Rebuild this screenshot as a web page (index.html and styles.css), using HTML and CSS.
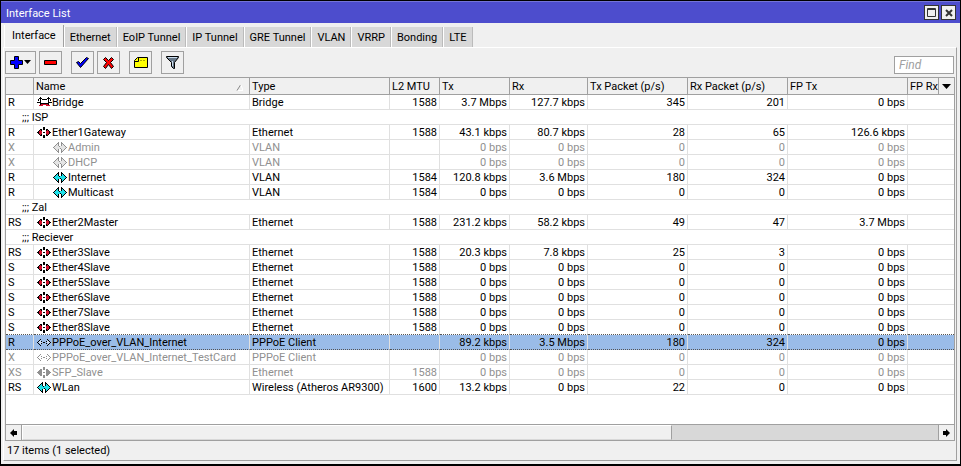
FILE: index.html
```
<!DOCTYPE html>
<html lang="en">
<head>
<meta charset="utf-8">
<title>Interface List</title>
<link rel="stylesheet" href="styles.css">
</head>
<body>
<svg class="sprite" aria-hidden="true">
<symbol id="eth" viewBox="0 0 14 11"><path fill="currentColor" d="M0 5h1V4h1V3h1V2h2v7H3V8H2V7H1V6H0zM14 5h-1V4h-1V3h-1V2H9v7h2V8h1V7h1V6h1zM6 0h2v3H6zM6 5h2v1H6zM6 8h2v3H6z"/><path d="M2 4h3v3H2zM3 3h1v5H3zM9 4h3v3H9zM10 3h1v5h-1z"/></symbol>
<symbol id="vlan" viewBox="0 0 14 11"><path d="M1 5h1V4h1V3h1V2h1V1h1v3h2V1h1v1h1v1h1v1h1v1h1v1h-1v1h-1v1h-1v1H9v1H8V7H6v3H5V9H4V8H3V7H2V6H1z"/><path fill="currentColor" d="M0 5h1v1H0zM1 4h1v1H1zM2 3h1v1H2zM3 2h1v1H3zM4 1h1v1H4zM5 0h1v4H5zM1 6h1v1H1zM2 7h1v1H2zM3 8h1v1H3zM4 9h1v1H4zM5 7h1v4H5zM13 5h1v1h-1zM12 4h1v1h-1zM11 3h1v1h-1zM10 2h1v1h-1zM9 1h1v1H9zM8 0h1v4H8zM12 6h1v1h-1zM11 7h1v1h-1zM10 8h1v1h-1zM9 9h1v1H9zM8 7h1v4H8zM6 4h1v1H6zM7 6h1v1H7z"/></symbol>
<symbol id="ppp" viewBox="0 0 14 9"><path fill="#fff" fill-opacity=".5" d="M1 4l2-2 2 2-2 2zM9 4l2-2 2 2-2 2z"/><path fill="currentColor" d="M0 4h1v1H0zM1 3h1v1H1zM2 2h1v1H2zM3 1h1v1H3zM4 3h1v1H4zM4 5h1v1H4zM1 5h1v1H1zM2 6h1v1H2zM3 7h1v1H3zM6 4h2v1H6zM13 4h1v1h-1zM12 3h1v1h-1zM11 2h1v1h-1zM10 1h1v1h-1zM9 3h1v1H9zM9 5h1v1H9zM12 5h1v1h-1zM11 6h1v1h-1zM10 7h1v1h-1z"/></symbol>
<symbol id="bridge" viewBox="0 0 15 11"><path fill="currentColor" d="M3 0h1v8H3zM11 0h1v8h-1zM4 1h1v1H4zM5 2h5v1H5zM10 1h1v1h-1zM2 1h1v1H2zM1 2h1v2H1zM12 1h1v1h-1zM13 2h1v2h-1zM0 5h3v1H0zM12 5h3v1h-3zM4 6h7v1H4z"/><path d="M4 7h7v1H4zM2 8h4v1H2zM9 8h4v1H9z"/></symbol>
</svg>
<main class="window">
<header class="titlebar"><h1>Interface List</h1>
<button aria-label="Maximize"><svg width="9" height="9"><path fill="none" stroke="#333" d="M.5.5h8v8h-8zM0 1.500h9"/></svg></button>
<button aria-label="Close"><svg width="8" height="8"><path stroke="#333" stroke-width="2" d="M1 1l6 6M7 1L1 7"/></svg></button></header>
<nav class="tabs"><button class="active">Interface</button><button>Ethernet</button><button>EoIP Tunnel</button><button>IP Tunnel</button><button>GRE Tunnel</button><button>VLAN</button><button>VRRP</button><button>Bonding</button><button>LTE</button></nav>
<section class="panel">
<div class="toolbar">
<button class="wide" aria-label="Add"><svg width="22" height="13"><path fill="#00f" stroke="#000" d="M4.500.5h4v4h4v4h-4v4h-4v-4h-4v-4h4z"/><path d="M14 4h7l-3.500 4z"/></svg></button>
<button aria-label="Remove"><svg width="13" height="5"><path fill="#f00" stroke="#000" d="M.5.5h12v4H.5z"/></svg></button>
<button class="gap" aria-label="Enable"><svg width="13" height="11"><path fill="#00f" stroke="#000" d="M.5 5.500l2-1 2 2 6-6 2 1-8 9z"/></svg></button>
<button aria-label="Disable"><svg width="12" height="12"><path fill="#f00" stroke="#000" d="M.5 2.500l2-2 3 3 3-3 2 2-3 3 3 4-2 2-3-4-3 4-2-2 3-4z"/></svg></button>
<button class="gap" aria-label="Comment"><svg width="14" height="11"><path fill="#ff0" stroke="#000" d="M3.500.5h10v10H.5v-7z"/><path fill="none" stroke="#000" d="M.5 4.500h4v-4"/><path stroke="#aa0" stroke-dasharray="2 1" d="M6 3.500h6"/></svg></button>
<button class="gap" aria-label="Filter"><svg width="13" height="13"><path fill="#678" stroke="#000" d="M.5.5h12v1l-4 5v6h-1l-2-2v-4l-5-5z"/><path stroke="#cde" d="M2 1.500h9M6.500 5v5"/></svg></button>
<input type="text" placeholder="Find" aria-label="Find">
</div>
<div class="grid">
<table>
<colgroup><col class="c-flag"><col class="c-name"><col class="c-type"><col class="c-mtu"><col class="c-tx"><col class="c-rx"><col class="c-pkt"><col class="c-pkt"><col class="c-fp"><col></colgroup>
<thead><tr><th></th><th><div class="sort">Name<svg width="7" height="7"><path fill="none" stroke="#888" d="M1 6.500L4.500 1"/><path stroke="#fff" d="M5 1l2 5.500H2" fill="none"/></svg></div></th><th>Type</th><th>L2 MTU</th><th>Tx</th><th>Rx</th><th>Tx Packet (p/s)</th><th>Rx Packet (p/s)</th><th>FP Tx</th><th class="last"><div class="sort"><span>FP Rx</span><button aria-label="Choose columns"><svg width="9" height="5"><path d="M0 0h9L4.500 5z"/></svg></button></div></th></tr></thead>
<tbody>
<tr><td>R</td><td><svg class="ico bridge"><use href="#bridge"/></svg>Bridge</td><td>Bridge</td><td>1588</td><td>3.7 Mbps</td><td>127.7 kbps</td><td>345</td><td>201</td><td>0 bps</td><td></td></tr>
<tr class="note"><td colspan="10">;;; ISP</td></tr>
<tr><td>R</td><td><svg class="ico eth"><use href="#eth"/></svg>Ether1Gateway</td><td>Ethernet</td><td>1588</td><td>43.1 kbps</td><td>80.7 kbps</td><td>28</td><td>65</td><td>126.6 kbps</td><td></td></tr>
<tr class="off child"><td>X</td><td><svg class="ico vlan"><use href="#vlan"/></svg>Admin</td><td>VLAN</td><td></td><td>0 bps</td><td>0 bps</td><td>0</td><td>0</td><td>0 bps</td><td></td></tr>
<tr class="off child"><td>X</td><td><svg class="ico vlan"><use href="#vlan"/></svg>DHCP</td><td>VLAN</td><td></td><td>0 bps</td><td>0 bps</td><td>0</td><td>0</td><td>0 bps</td><td></td></tr>
<tr class="child"><td>R</td><td><svg class="ico vlan"><use href="#vlan"/></svg>Internet</td><td>VLAN</td><td>1584</td><td>120.8 kbps</td><td>3.6 Mbps</td><td>180</td><td>324</td><td>0 bps</td><td></td></tr>
<tr class="child"><td>R</td><td><svg class="ico vlan"><use href="#vlan"/></svg>Multicast</td><td>VLAN</td><td>1584</td><td>0 bps</td><td>0 bps</td><td>0</td><td>0</td><td>0 bps</td><td></td></tr>
<tr class="note"><td colspan="10">;;; Zal</td></tr>
<tr><td>RS</td><td><svg class="ico eth"><use href="#eth"/></svg>Ether2Master</td><td>Ethernet</td><td>1588</td><td>231.2 kbps</td><td>58.2 kbps</td><td>49</td><td>47</td><td>3.7 Mbps</td><td></td></tr>
<tr class="note"><td colspan="10">;;; Reciever</td></tr>
<tr><td>RS</td><td><svg class="ico eth"><use href="#eth"/></svg>Ether3Slave</td><td>Ethernet</td><td>1588</td><td>20.3 kbps</td><td>7.8 kbps</td><td>25</td><td>3</td><td>0 bps</td><td></td></tr>
<tr><td>S</td><td><svg class="ico eth"><use href="#eth"/></svg>Ether4Slave</td><td>Ethernet</td><td>1588</td><td>0 bps</td><td>0 bps</td><td>0</td><td>0</td><td>0 bps</td><td></td></tr>
<tr><td>S</td><td><svg class="ico eth"><use href="#eth"/></svg>Ether5Slave</td><td>Ethernet</td><td>1588</td><td>0 bps</td><td>0 bps</td><td>0</td><td>0</td><td>0 bps</td><td></td></tr>
<tr><td>S</td><td><svg class="ico eth"><use href="#eth"/></svg>Ether6Slave</td><td>Ethernet</td><td>1588</td><td>0 bps</td><td>0 bps</td><td>0</td><td>0</td><td>0 bps</td><td></td></tr>
<tr><td>S</td><td><svg class="ico eth"><use href="#eth"/></svg>Ether7Slave</td><td>Ethernet</td><td>1588</td><td>0 bps</td><td>0 bps</td><td>0</td><td>0</td><td>0 bps</td><td></td></tr>
<tr><td>S</td><td><svg class="ico eth"><use href="#eth"/></svg>Ether8Slave</td><td>Ethernet</td><td>1588</td><td>0 bps</td><td>0 bps</td><td>0</td><td>0</td><td>0 bps</td><td></td></tr>
<tr class="selected"><td>R</td><td><svg class="ico ppp"><use href="#ppp"/></svg>PPPoE_over_VLAN_Internet</td><td>PPPoE Client</td><td></td><td>89.2 kbps</td><td>3.5 Mbps</td><td>180</td><td>324</td><td>0 bps</td><td></td></tr>
<tr class="off"><td>X</td><td><svg class="ico ppp"><use href="#ppp"/></svg>PPPoE_over_VLAN_Internet_TestCard</td><td>PPPoE Client</td><td></td><td>0 bps</td><td>0 bps</td><td>0</td><td>0</td><td>0 bps</td><td></td></tr>
<tr class="off"><td>XS</td><td><svg class="ico eth"><use href="#eth"/></svg>SFP_Slave</td><td>Ethernet</td><td>1588</td><td>0 bps</td><td>0 bps</td><td>0</td><td>0</td><td>0 bps</td><td></td></tr>
<tr><td>RS</td><td><svg class="ico vlan"><use href="#vlan"/></svg>WLan</td><td>Wireless (Atheros AR9300)</td><td>1600</td><td>13.2 kbps</td><td>0 bps</td><td>22</td><td>0</td><td>0 bps</td><td></td></tr>
</tbody>
</table>
<div class="scroll">
<button aria-label="Scroll left"><svg width="7" height="8"><path d="M0 4l4-4v2h3v4H4v2z"/></svg></button>
<div class="track"><div class="thumb"></div></div>
<button aria-label="Scroll right"><svg width="7" height="8"><path d="M7 4L3 0v2H0v4h3v2z"/></svg></button>
</div>
</div>
<footer>17 items (1 selected)</footer>
</section>
</main>
</body>
</html>
```

FILE: styles.css
```
* { box-sizing: border-box; }
body { margin: 0; background: #000; font: 11px/14px Roboto, "Liberation Sans", Arial, sans-serif; color: #000; }
button, input { font: inherit; color: inherit; margin: 0; padding: 0; border-radius: 0; }
button svg { display: block; }
.sprite { display: none; }
.window { height: 100vh; display: flex; flex-direction: column; background: #f0f0f0; border: 1px solid #000; border-bottom-width: 2px; }
.titlebar { display: flex; align-items: center; gap: 2px; height: 22px; padding: 0 4px 0 5px; background: #4d4dcd; border-top: 1px solid #7474d8; color: #fff; }
.titlebar h1 { flex: 1; margin: 0; padding-top: 2px; font: inherit; }
.titlebar button { width: 15px; height: 15px; border: 1px solid #333; background: #f0f0f0; display: grid; place-items: center; }
.tabs { display: flex; align-items: flex-end; height: 24px; padding: 0 0 0 3px; }
.tabs button { height: 20px; padding: 2px 5px 0; border: 0; border-right: 1px solid #bbb; border-left: 1px solid #fff; background: #d8d8d8; }
.tabs .active { height: 22px; padding: 0 7px; background: #f0f0f0; border-right-color: #a0a0a0; }
.panel { flex: 1; display: flex; flex-direction: column; margin: 0 3px 3px 2px; padding: 0 1px; border: 1px solid #a0a0a0; border-top-color: #fff; border-left-color: #fff; }
.toolbar { display: flex; align-items: center; gap: 3px; height: 29px; padding-right: 1px; }
.toolbar button { width: 23px; height: 23px; border: 1px solid #a0a0a0; background: #f0f0f0; display: grid; place-items: center; }
.toolbar .wide { width: 31px; }
.toolbar .gap { margin-left: 6px; }
.toolbar input { width: 60px; height: 18px; margin-left: auto; align-self: flex-end; margin-bottom: 3px; padding: 0 4px; border: 1px solid #a0a0a0; background: #fff; font-size: 12px; }
.toolbar input::placeholder { color: #a0a0a0; font-style: italic; }
.grid { flex: 1; display: flex; flex-direction: column; border: 1px solid #a0a0a0; background: #fff; }
table { width: 100%; table-layout: fixed; border-collapse: separate; border-spacing: 0; }
.c-flag { width: 28px; } .c-name { width: 216px; } .c-type { width: 140px; } .c-mtu { width: 50px; } .c-tx { width: 70px; } .c-rx { width: 78px; } .c-pkt { width: 100px; } .c-fp { width: 120px; }
th { height: 17px; padding: 2px 2px 0; background: #f0f0f0; border-right: 1px solid #a0a0a0; border-bottom: 1px solid #a0a0a0; font-weight: normal; text-align: left; white-space: nowrap; overflow: hidden; }
.sort { display: flex; justify-content: space-between; align-items: center; }
.sort > svg { margin-right: 4px; }
th.last { padding: 0 0 0 2px; border-right: 0; }
.last span { flex: 1; min-width: 0; padding-top: 2px; overflow: hidden; }
.last button { width: 16px; height: 16px; border: 0; border-left: 1px solid #a0a0a0; background: #f0f0f0; display: grid; place-items: center; }
td { height: 15px; padding: 2px 2px 0; line-height: 12px; border-right: 1px solid #e0e0e0; border-bottom: 1px solid #e0e0e0; white-space: nowrap; overflow: hidden; }
td:last-child { border-right: 0; }
td:nth-child(n+4) { text-align: right; }
.note td { padding-left: 16px; }
.child td:nth-child(2) { padding-left: 18px; }
.off { color: #909090; }
.selected td { background: #9abce8; border-bottom: 1px dotted #555; }
tr:has(+ .selected) td { border-bottom: 1px dotted #555; }
.ico { width: 14px; height: 11px; margin: 0 1px; vertical-align: top; shape-rendering: crispEdges; }
.ico.bridge { width: 15px; margin-right: 0; }
.eth, .bridge { fill: #d0102c; }
.vlan { fill: #20e0e8; }
.ico.ppp { height: 9px; margin-top: 1px; }
.off .ico { fill: #e4e4e4; }
.off .ico.eth { fill: #909090; }
.scroll { display: flex; height: 16px; margin-top: auto; border-top: 1px solid #a0a0a0; background: #f0f0f0; }
.scroll button { width: 15px; border: 0; background: #f0f0f0; display: grid; place-items: center; }
.track { flex: 1; background: #d8d8d8; border: solid #a0a0a0; border-width: 0 1px; }
.thumb { width: 71%; height: 15px; background: #f0f0f0; border: 1px solid #fff; border-right-color: #a0a0a0; border-bottom-color: #d8d8d8; }
footer { height: 19px; padding: 3px 2px 2px; }
```
